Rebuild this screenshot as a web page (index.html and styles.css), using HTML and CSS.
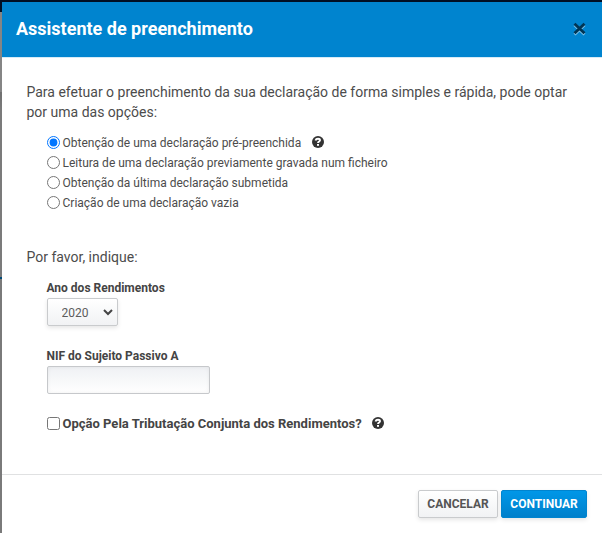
FILE: index.html
```html
<!DOCTYPE html>
<html lang="pt">
<head>
    <meta charset="UTF-8">
    <meta name="viewport" content="width=device-width, initial-scale=1.0">
    <title>Assistente de preenchimento</title>
    <link rel="stylesheet" href="styles.css">
</head>
<body>
    <div class="modal">
        <div class="modal-header">
            <h3>Assistente de preenchimento</h3>
            <button class="close" aria-label="Fechar">
                <svg width="13" height="14" viewBox="0 0 13 14">
                    <path d="M1.5 3 L11.5 12.5 M11.5 3 L1.5 12.5" stroke="#7fc2e8" stroke-width="2.8"/>
                    <path d="M1.5 1.8 L11.5 11.3 M11.5 1.8 L1.5 11.3" stroke="#003554" stroke-width="2.8"/>
                </svg>
            </button>
        </div>
        <div class="modal-body">
            <p class="intro">Para efetuar o preenchimento da sua declaração de forma simples e rápida, pode optar por uma das opções:</p>
            <div class="options">
                <label class="radio">
                    <input type="radio" name="opcao" checked>
                    <span>Obtenção de uma declaração pré-preenchida</span>
                    <svg class="help" width="12" height="12" viewBox="0 0 12 12">
                        <circle cx="6" cy="6" r="6" fill="#333"/>
                        <path d="M3.5 4.5 C3.9 3.1 4.8 2.8 6 2.8 C7.3 2.8 8 3.5 8 4.3 C8 5.6 6 5.5 6 7.1" fill="none" stroke="#fff" stroke-width="1.9"/>
                        <rect x="5" y="8" width="2" height="1.8" fill="#fff"/>
                    </svg>
                </label>
                <label class="radio">
                    <input type="radio" name="opcao">
                    <span>Leitura de uma declaração previamente gravada num ficheiro</span>
                </label>
                <label class="radio">
                    <input type="radio" name="opcao">
                    <span>Obtenção da última declaração submetida</span>
                </label>
                <label class="radio">
                    <input type="radio" name="opcao">
                    <span>Criação de uma declaração vazia</span>
                </label>
            </div>
            <p class="indique">Por favor, indique:</p>
            <div class="fields">
                <label class="field-label" for="ano">Ano dos Rendimentos</label>
                <div class="select">
                    <select id="ano">
                        <option>2020</option>
                    </select>
                    <svg class="arrow" width="10" height="7" viewBox="0 0 10 7">
                        <path d="M1 1 L5 5 L9 1" fill="none" stroke="#444" stroke-width="2"/>
                    </svg>
                </div>
                <label class="field-label" for="nif">NIF do Sujeito Passivo A</label>
                <input type="text" class="nif" id="nif">
                <label class="check">
                    <input type="checkbox">
                    <span>Opção Pela Tributação Conjunta dos Rendimentos?</span>
                    <svg class="help" width="12" height="12" viewBox="0 0 12 12">
                        <circle cx="6" cy="6" r="6" fill="#333"/>
                        <path d="M3.5 4.5 C3.9 3.1 4.8 2.8 6 2.8 C7.3 2.8 8 3.5 8 4.3 C8 5.6 6 5.5 6 7.1" fill="none" stroke="#fff" stroke-width="1.9"/>
                        <rect x="5" y="8" width="2" height="1.8" fill="#fff"/>
                    </svg>
                </label>
            </div>
        </div>
        <div class="modal-footer">
            <button class="btn">CANCELAR</button>
            <button class="btn btn-primary">CONTINUAR</button>
        </div>
    </div>
</body>
</html>
```
FILE: styles.css
```css
* {
    box-sizing: border-box;
}

body {
    margin: 0;
    padding: 2px 0 0 2px;
    height: 533px;
    overflow: hidden;
    font-family: Roboto, sans-serif;
    color: #444;
    background: linear-gradient(#000f24 12px, #858585 12px, #858585 92px, #707070 92px, #7b7b7b 110px, #7b7b7b 277px, #004a78 277px, #004a78 279px, #7a7a7a 279px);
}

.modal {
    height: 531px;
    background-color: #fff;
}

.modal-header {
    display: flex;
    justify-content: space-between;
    align-items: center;
    height: 56px;
    padding: 0 16px 2px 14px;
    background-color: #0084cf;
    border-bottom: 1px solid #d5ebf7;
}

.modal-header h3 {
    margin: 0;
    font-size: 18px;
    font-weight: 700;
    line-height: 24px;
    color: #fff;
}

.close {
    display: flex;
    padding: 0;
    border: none;
    background: none;
}

.modal-body {
    height: 416px;
    padding: 24px 25px 0 24.5px;
}

.intro, .indique {
    margin: 0;
    font-size: 14px;
    line-height: 20px;
    color: #4c4c4c;
}

.options {
    padding: 10px 0 0 20px;
}

.radio, .check {
    display: flex;
    align-items: center;
    height: 20px;
    font-size: 12px;
}

.radio {
    color: #4c4c4c;
}

.radio span {
    padding-top: 2px;
}

.radio input, .check input {
    width: 13px;
    height: 13px;
    margin: 0 3px 0 0;
}

.help {
    margin-left: 10.5px;
}

.indique {
    margin-top: 35px;
}

.fields {
    padding: 11px 0 0 20px;
}

.field-label {
    display: block;
    font-size: 12px;
    font-weight: 700;
    line-height: 20px;
}

.select {
    position: relative;
    width: 71px;
    height: 28px;
    margin-bottom: 20px;
}

.select select {
    appearance: none;
    width: 71px;
    height: 28px;
    padding: 2px 14px 0;
    border: 1px solid #c9cbcd;
    border-radius: 2px;
    background: linear-gradient(#fff, #f1f2f4);
    box-shadow: 0 2px 4px rgba(0, 0, 0, 0.1);
    font-family: Roboto, sans-serif;
    font-size: 12px;
    color: #5c5c5c;
}

.arrow {
    position: absolute;
    top: 11px;
    right: 5px;
}

.nif {
    display: block;
    width: 163px;
    height: 28px;
    border: 1px solid #c6c8cb;
    border-radius: 2px;
    background: linear-gradient(#eff1f4, #fff);
    box-shadow: inset 0 0 4px rgba(0, 0, 0, 0.06);
}

.check {
    margin-top: 19px;
    font-size: 13px;
    font-weight: 700;
}

.modal-footer {
    display: flex;
    justify-content: flex-end;
    gap: 3px;
    padding: 15px 15px 0;
    border-top: 1px solid #e0e1e2;
}

.btn {
    width: 80px;
    height: 28px;
    padding: 0;
    border: 1px solid #c9cbcd;
    border-radius: 2px;
    background: linear-gradient(#fff, #f1f2f4);
    box-shadow: 0 2px 4px rgba(0, 0, 0, 0.1);
    font-family: Roboto, sans-serif;
    font-size: 12px;
    font-weight: 700;
    color: #555;
}

.btn-primary {
    width: 86px;
    border-color: #0084cf;
    background: linear-gradient(#0097e8, #0080cb);
    color: #fff;
}
```
